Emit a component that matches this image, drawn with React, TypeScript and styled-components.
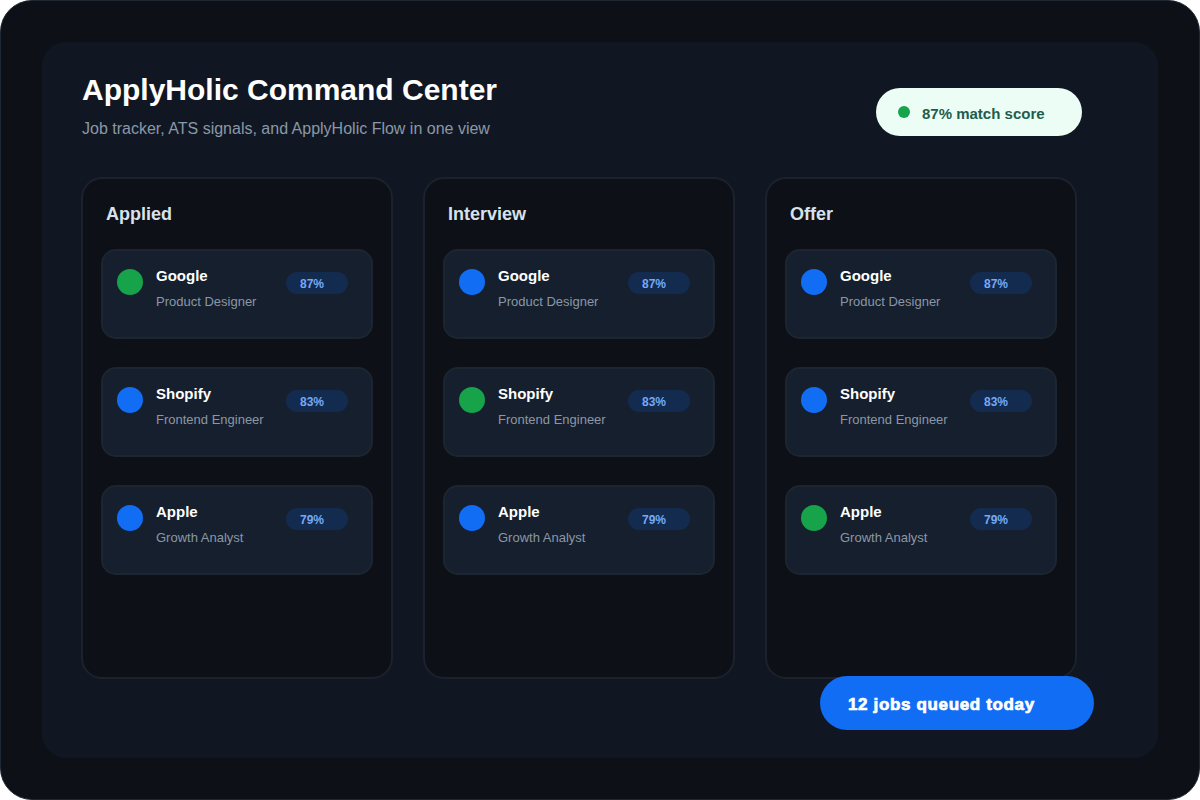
import styled, { createGlobalStyle } from "styled-components";

const GlobalStyle = createGlobalStyle`
  html, body {
    margin: 0;
    padding: 0;
    width: 1200px;
    height: 800px;
    background: #ffffff;
    overflow: hidden;
  }
  * {
    box-sizing: border-box;
  }
`;

const Frame = styled.div`
  width: 1200px;
  height: 800px;
  padding: 41px;
  border: 1px solid #1f2733;
  border-radius: 32px;
  background: #0d1117;
  font-family: "Liberation Sans", Arial, sans-serif;
`;

const Panel = styled.main`
  position: relative;
  height: 716px;
  padding: 30px 40px 0 39px;
  border-radius: 24px;
  background: #111722;
`;

const Header = styled.header`
  display: flex;
  justify-content: space-between;
  align-items: flex-start;
  height: 105px;
  margin-left: 1px;
  padding-right: 36px;
`;

const Title = styled.h1`
  margin: 0;
  font-size: 30px;
  line-height: 36px;
  font-weight: 700;
  color: #ffffff;
`;

const Subtitle = styled.p`
  margin: 12px 0 0;
  font-size: 16px;
  line-height: 18px;
  color: #8a97a8;
`;

const ScorePill = styled.div`
  display: flex;
  align-items: center;
  gap: 12px;
  width: 206px;
  height: 48px;
  margin-top: 16px;
  padding-left: 22px;
  border-radius: 24px;
  background: #ecfdf5;
  font-size: 15px;
  font-weight: 700;
  color: #1f5c4d;
`;

const ScoreDot = styled.span`
  width: 12px;
  height: 12px;
  border-radius: 50%;
  background: #16a34a;
`;

const ScoreLabel = styled.span`
  padding-top: 2px;
`;

const Board = styled.section`
  display: flex;
  gap: 30px;
`;

const Column = styled.div`
  width: 312px;
  height: 502px;
  padding: 25px 18px 0;
  border: 2px solid #1b222d;
  border-radius: 21px;
  background: #0d1117;
`;

const ColumnTitle = styled.h2`
  margin: 0 0 25px 5px;
  font-size: 18px;
  line-height: 20px;
  font-weight: 700;
  color: #d9e1ec;
`;

const CardList = styled.div`
  display: flex;
  flex-direction: column;
  gap: 28px;
`;

const Card = styled.article`
  display: flex;
  align-items: flex-start;
  width: 272px;
  height: 90px;
  padding: 18px 0 0 14px;
  border: 2px solid #1d2531;
  border-radius: 15px;
  background: #161f2d;
`;

const Avatar = styled.span<{ $active: boolean }>`
  flex: none;
  width: 26px;
  height: 26px;
  border-radius: 50%;
  background: ${(p) => (p.$active ? "#16a34a" : "#126df5")};
`;

const CardText = styled.div`
  width: 130px;
  margin-left: 13px;
`;

const Company = styled.div`
  margin-top: -2px;
  font-size: 15px;
  line-height: 18px;
  font-weight: 700;
  color: #ffffff;
`;

const Role = styled.div`
  margin-top: 9px;
  font-size: 13px;
  line-height: 16px;
  color: #8a97a8;
`;

const Badge = styled.span`
  flex: none;
  width: 62px;
  height: 22px;
  margin-top: 3px;
  padding-left: 14px;
  border-radius: 11px;
  background: #142b50;
  font-size: 12px;
  line-height: 24px;
  font-weight: 700;
  color: #76a9f5;
`;

const QueuePill = styled.div`
  position: absolute;
  left: 778px;
  top: 634px;
  width: 274px;
  height: 54px;
  padding-left: 28px;
  border-radius: 27px;
  background: #126df5;
  font-size: 17px;
  line-height: 58px;
  font-weight: 700;
  color: #ffffff;
  letter-spacing: 0.65px;
  -webkit-text-stroke: 0.7px #ffffff;
`;

const jobs = [
  { company: "Google", role: "Product Designer", score: "87%" },
  { company: "Shopify", role: "Frontend Engineer", score: "83%" },
  { company: "Apple", role: "Growth Analyst", score: "79%" },
];

const columns = ["Applied", "Interview", "Offer"];

export default function App() {
  return (
    <>
      <GlobalStyle />
      <Frame>
        <Panel>
          <Header>
            <div>
              <Title>ApplyHolic Command Center</Title>
              <Subtitle>Job tracker, ATS signals, and ApplyHolic Flow in one view</Subtitle>
            </div>
            <ScorePill>
              <ScoreDot />
              <ScoreLabel>87% match score</ScoreLabel>
            </ScorePill>
          </Header>
          <Board>
            {columns.map((name, colIndex) => (
              <Column key={name}>
                <ColumnTitle>{name}</ColumnTitle>
                <CardList>
                  {jobs.map((job, jobIndex) => (
                    <Card key={job.company}>
                      <Avatar $active={jobIndex === colIndex} />
                      <CardText>
                        <Company>{job.company}</Company>
                        <Role>{job.role}</Role>
                      </CardText>
                      <Badge>{job.score}</Badge>
                    </Card>
                  ))}
                </CardList>
              </Column>
            ))}
          </Board>
          <QueuePill>12 jobs queued today</QueuePill>
        </Panel>
      </Frame>
    </>
  );
}
